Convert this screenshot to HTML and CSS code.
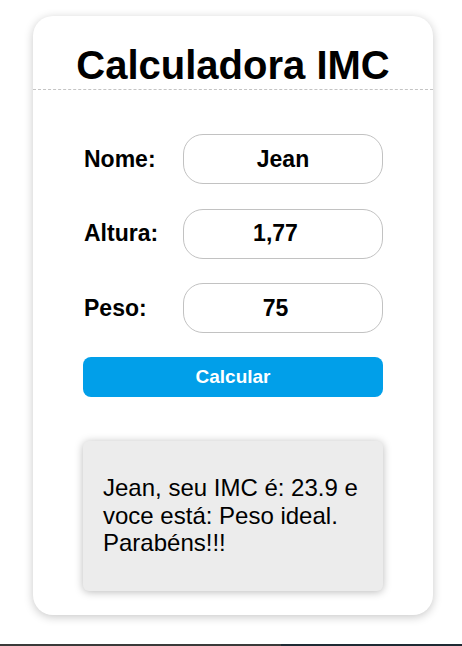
FILE: index.html
```html
<!DOCTYPE html>
<html lang="pt-BR">
<head>
<meta charset="utf-8">
<title>Calculadora IMC</title>
<link rel="stylesheet" href="styles.css">
</head>
<body>
<main class="card">
  <h1 class="title">Calculadora IMC</h1>
  <form class="form">
    <div class="row">
      <label class="label" for="nome">Nome:</label>
      <input class="field" id="nome" type="text" value="Jean">
    </div>
    <div class="row">
      <label class="label" for="altura">Altura:</label>
      <input class="field field-num" id="altura" type="text" value="1,77">
    </div>
    <div class="row">
      <label class="label" for="peso">Peso:</label>
      <input class="field field-num" id="peso" type="text" value="75">
    </div>
    <button class="btn" type="button">Calcular</button>
  </form>
  <div class="result">Jean, seu IMC é: 23.9 e voce está: Peso ideal. Parabéns!!!</div>
</main>
<div class="strip"><span class="strip-left"></span><span class="strip-right"></span></div>
</body>
</html>
```

FILE: styles.css
```css
html, body {
  margin: 0;
  padding: 0;
  background: #ffffff;
  font-family: "Liberation Sans", Arial, sans-serif;
  color: #000;
}
body {
  height: 646px;
  overflow: hidden;
  padding-top: 16px;
  box-sizing: border-box;
}
.card {
  width: 400px;
  margin-left: 33px;
  background: #fff;
  border-radius: 20px;
  box-shadow: 0 2px 10px rgba(0, 0, 0, 0.22);
  padding-bottom: 24px;
}
.title {
  margin: 0;
  padding: 26px 0 1px;
  font-size: 40px;
  line-height: 46px;
  font-weight: bold;
  text-align: center;
  border-bottom: 1px dashed #c4c4c4;
}
.form {
  padding: 44px 50px 0;
  display: flex;
  flex-direction: column;
  gap: 24.5px;
}
.row {
  display: flex;
  align-items: center;
  justify-content: space-between;
}
.label {
  font-size: 23px;
  font-weight: bold;
  padding-left: 1px;
}
.field {
  box-sizing: border-box;
  width: 200px;
  height: 50px;
  border: 1px solid #c2c2c2;
  border-radius: 20px;
  background: #fff;
  font-family: "Liberation Sans", Arial, sans-serif;
  font-size: 23px;
  font-weight: bold;
  text-align: center;
  color: #000;
  padding: 0;
  outline: none;
}
.field-num {
  padding-right: 15px;
}
.btn {
  margin-top: -0.5px;
  height: 40px;
  border: none;
  border-radius: 8px;
  background: #019fe9;
  color: #fff;
  font-family: "Liberation Sans", Arial, sans-serif;
  font-size: 19px;
  font-weight: bold;
  padding: 0;
}
.result {
  box-sizing: border-box;
  margin: 44px 50px 0;
  height: 150px;
  padding: 33px 20px;
  background: #ececec;
  border-radius: 6px;
  box-shadow: 0 1px 8px rgba(0, 0, 0, 0.28);
  font-size: 24px;
  line-height: 27.6px;
}
.strip {
  display: flex;
  height: 2px;
  margin-top: 29px;
}
.strip-left {
  width: 281px;
  background: #3a3a3a;
}
.strip-right {
  flex: 1;
  background: #1e2a33;
}
```
